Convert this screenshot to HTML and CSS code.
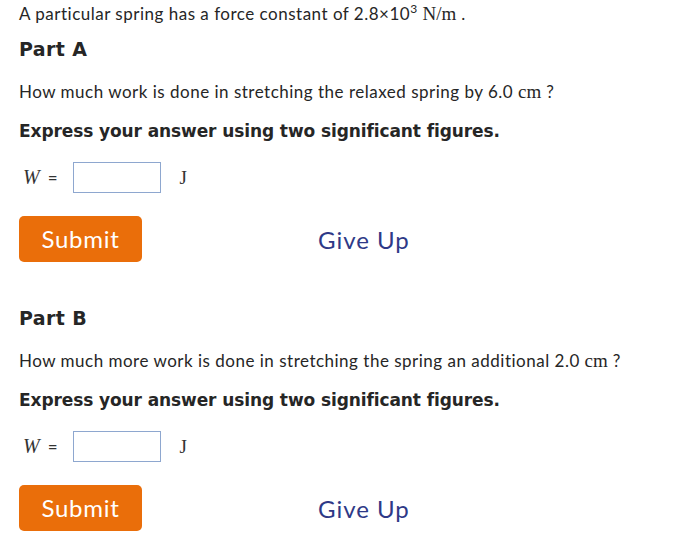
FILE: index.html
```html
<!DOCTYPE html>
<html lang="en">
<head>
<meta charset="utf-8">
<title>Spring work</title>
<link rel="stylesheet" href="styles.css">
</head>
<body>
<main class="page">
  <p class="intro">A particular spring has a force constant of 2.8×10<sup class="exp">3</sup> <span class="math">N/m</span> .</p>

  <section class="part">
    <h2 class="part-title">Part A</h2>
    <p class="question">How much work is done in stretching the relaxed spring by 6.0 <span class="math">cm</span> ?</p>
    <p class="instruction">Express your answer using two significant figures.</p>
    <div class="answer">
      <span class="var">W</span><span class="eq">=</span>
      <span class="box"></span>
      <span class="unit">J</span>
    </div>
    <div class="actions">
      <button class="submit">Submit</button>
      <a class="giveup">Give Up</a>
    </div>
  </section>

  <section class="part part-b">
    <h2 class="part-title">Part B</h2>
    <p class="question">How much more work is done in stretching the spring an additional 2.0 <span class="math">cm</span> ?</p>
    <p class="instruction">Express your answer using two significant figures.</p>
    <div class="answer">
      <span class="var">W</span><span class="eq">=</span>
      <span class="box"></span>
      <span class="unit">J</span>
    </div>
    <div class="actions">
      <button class="submit">Submit</button>
      <a class="giveup">Give Up</a>
    </div>
  </section>
</main>
</body>
</html>
```

FILE: styles.css
```css
html, body {
  margin: 0;
  padding: 0;
  background: #ffffff;
}

.page {
  padding: 0 19px;
  font-family: Lato, "Open Sans", sans-serif;
  color: #262626;
}

.intro {
  margin: 4px 0 0;
  font-size: 17px;
  line-height: 20px;
  letter-spacing: 0.5px;
}

.exp {
  font-size: 12px;
  line-height: 0;
  vertical-align: 7px;
}

.math {
  font-family: "Liberation Serif", "DejaVu Serif", serif;
  font-size: 19px;
  letter-spacing: 0;
}

.part {
  padding-top: 14px;
}

.part-b {
  padding-top: 45px;
}

.part-title {
  margin: 0;
  font-family: "DejaVu Sans", Lato, sans-serif;
  font-size: 19px;
  font-weight: 700;
  line-height: 22px;
  letter-spacing: 0.4px;
}

.question {
  margin: 22px 0 0;
  font-size: 17px;
  line-height: 20px;
  letter-spacing: 0.5px;
}

.instruction {
  margin: 19px 0 0;
  font-family: "DejaVu Sans", Lato, sans-serif;
  font-size: 17px;
  font-weight: 700;
  line-height: 20px;
  letter-spacing: -0.1px;
}

.answer {
  display: flex;
  align-items: center;
  margin-top: 21px;
  height: 31px;
  padding-left: 4px;
}

.var {
  font-family: "Liberation Serif", "DejaVu Serif", serif;
  font-style: italic;
  font-size: 20px;
  color: #333;
}

.eq {
  margin-left: 8px;
  font-size: 17px;
  color: #333;
}

.box {
  box-sizing: border-box;
  width: 88px;
  height: 31px;
  margin-left: 15px;
  border: 1px solid #8ea7cf;
  background: #fff;
}

.unit {
  margin-left: 19px;
  font-family: "Liberation Serif", "DejaVu Serif", serif;
  font-size: 19px;
  color: #333;
}

.actions {
  display: flex;
  align-items: center;
  margin-top: 23px;
}

.submit {
  box-sizing: border-box;
  width: 123px;
  height: 46px;
  padding: 0;
  border: none;
  border-radius: 5px;
  background: #ea6e0a;
  color: #ffffff;
  font-family: Lato, "Open Sans", sans-serif;
  font-size: 24px;
  letter-spacing: 0.7px;
  line-height: 46px;
}

.giveup {
  margin-left: 176px;
  font-size: 24px;
  letter-spacing: 1px;
  color: #2e3987;
}
```
